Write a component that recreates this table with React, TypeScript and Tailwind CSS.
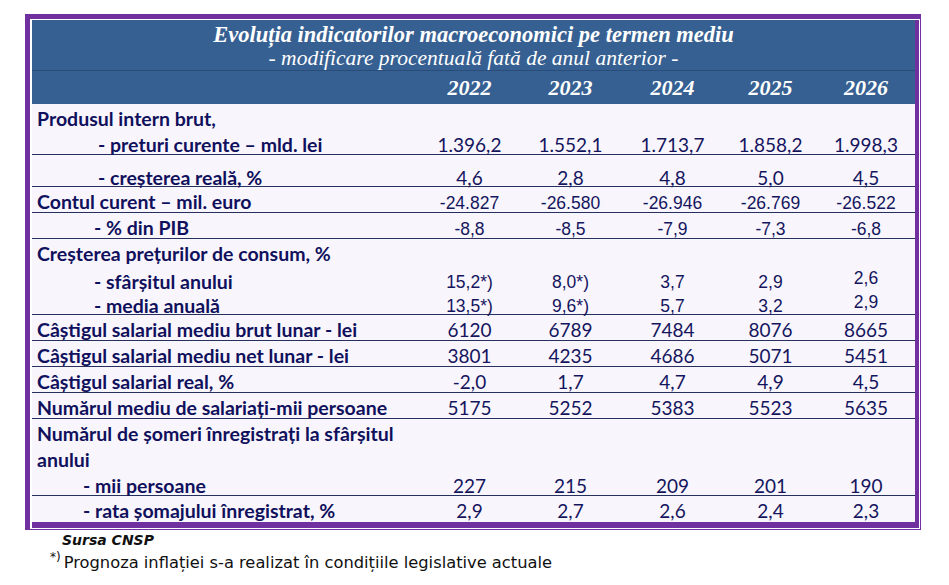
import React from "react";

type Line = {
  label: string;
  ind: number;
  h: number;
  vals?: string[];
  arial?: boolean;
  last2026Up?: boolean;
  pt?: number;
};

type Row = { lines: Line[]; border: boolean; pb?: number };

const V1 = ["1.396,2", "1.552,1", "1.713,7", "1.858,2", "1.998,3"];

const rows: Row[] = [
  {
    border: true,
    lines: [
      { label: "Produsul intern brut,", ind: 5, h: 26 },
      { label: "- preturi curente – mld. lei", ind: 66, h: 24, vals: V1 },
    ],
  },
  {
    border: true,
    lines: [{ label: "- creșterea reală, %", ind: 66, h: 31, pt: 8, vals: ["4,6", "2,8", "4,8", "5,0", "4,5"] }],
  },
  {
    border: true,
    lines: [
      { label: "Contul curent – mil. euro", ind: 5, h: 25, arial: true, vals: ["-24.827", "-26.580", "-26.946", "-26.769", "-26.522"] },
    ],
  },
  {
    border: true,
    lines: [{ label: "- % din PIB", ind: 62, h: 25, arial: true, vals: ["-8,8", "-8,5", "-7,9", "-7,3", "-6,8"] }],
  },
  {
    border: true,
    pb: 1,
    lines: [
      { label: "Creșterea prețurilor de consum, %", ind: 5, h: 26 },
      { label: "- sfârșitul anului", ind: 62, h: 24, arial: true, last2026Up: true, vals: ["15,2*)", "8,0*)", "3,7", "2,9", "2,6"] },
      { label: "- media anuală", ind: 62, h: 24, arial: true, last2026Up: true, vals: ["13,5*)", "9,6*)", "5,7", "3,2", "2,9"] },
    ],
  },
  {
    border: true,
    lines: [{ label: "Câștigul salarial mediu brut lunar - lei", ind: 5, h: 25, vals: ["6120", "6789", "7484", "8076", "8665"] }],
  },
  {
    border: true,
    lines: [{ label: "Câștigul salarial mediu net lunar - lei", ind: 5, h: 25, vals: ["3801", "4235", "4686", "5071", "5451"] }],
  },
  {
    border: true,
    lines: [{ label: "Câștigul salarial real, %", ind: 5, h: 25, vals: ["-2,0", "1,7", "4,7", "4,9", "4,5"] }],
  },
  {
    border: true,
    lines: [{ label: "Numărul mediu de salariați-mii persoane", ind: 5, h: 25, vals: ["5175", "5252", "5383", "5523", "5635"] }],
  },
  {
    border: true,
    lines: [
      { label: "Numărul de șomeri înregistrați la sfârșitul", ind: 5, h: 26 },
      { label: "anului", ind: 5, h: 26 },
      { label: "- mii persoane", ind: 51, h: 24, vals: ["227", "215", "209", "201", "190"] },
    ],
  },
  {
    border: false,
    lines: [{ label: "- rata șomajului înregistrat, %", ind: 51, h: 26, vals: ["2,9", "2,7", "2,6", "2,4", "2,3"] }],
  },
];

const GRID = "grid grid-cols-[388px_99px_103px_101px_95px_96px]";

function LineView({ l }: { l: Line }) {
  return (
    <div className={GRID} style={{ height: l.h, paddingTop: l.pt ?? 0 }}>
      <div
        className="flex items-center pb-[4px] font-bold text-[19.5px] text-[#10105c] whitespace-nowrap"
        style={{ paddingLeft: l.ind, fontFamily: "Lato, sans-serif" }}
      >
        {l.label}
      </div>
      {(l.vals ?? ["", "", "", "", ""]).map((v, i) => (
        <div
          key={i}
          className={
            "flex items-center justify-center whitespace-nowrap text-[#15155e] " +
            (l.arial ? "text-[17.5px]" : "text-[19px]")
          }
          style={{
            fontFamily: l.arial ? "'Liberation Sans', Arial, sans-serif" : "Lato, sans-serif",
            paddingBottom: l.last2026Up && i === 4 ? 10 : 2,
          }}
        >
          {v}
        </div>
      ))}
    </div>
  );
}

export default function App() {
  return (
    <div className="w-[949px] h-[585px] bg-white overflow-hidden">
      <div className="ml-[25px] mt-[14px] w-[896px] border-t-[5px] border-l-[5px] border-r border-b border-[#7030a0] bg-white pt-px pl-[2px] pr-px pb-px">
        <div className="border-r-[4px] border-b-[6px] border-[#7030a0] bg-[#f8f6fc]">
          {/* header */}
          <div className="bg-[#376092] text-white" style={{ fontFamily: "'Liberation Serif', 'Times New Roman', serif" }}>
            <div className="pt-[3px] border-b border-[#2a4c78] text-center italic">
              <div className="h-[24px] flex items-center justify-center font-bold text-[22.5px]">
                Evoluția indicatorilor macroeconomici pe termen mediu
              </div>
              <div className="h-[23px] flex items-center justify-center text-[21.5px]">
                - modificare procentuală fată de anul anterior -
              </div>
            </div>
            <div className={GRID + " h-[33px] italic font-bold text-[22px]"}>
              <div />
              {["2022", "2023", "2024", "2025", "2026"].map((y) => (
                <div key={y} className="flex items-center justify-center">
                  {y}
                </div>
              ))}
            </div>
          </div>
          {/* body */}
          {rows.map((r, i) => (
            <div
              key={i}
              className={r.border ? "border-b border-[#26305e]" : ""}
              style={{ paddingBottom: r.pb ?? 0 }}
            >
              {r.lines.map((l, j) => (
                <LineView key={j} l={l} />
              ))}
            </div>
          ))}
        </div>
      </div>
      <div style={{ fontFamily: "'DejaVu Sans', Verdana, sans-serif" }} className="text-[#111]">
        <div className="h-[20px] flex items-center pl-[62px] italic font-bold text-[14px]">Sursa CNSP</div>
        <div className="h-[26px] flex items-center pl-[50px] text-[16.3px]">
          <span className="text-[12px] relative -top-[6px] mr-[3px]">*)</span>
          Prognoza inflației s-a realizat în condițiile legislative actuale
        </div>
      </div>
    </div>
  );
}
